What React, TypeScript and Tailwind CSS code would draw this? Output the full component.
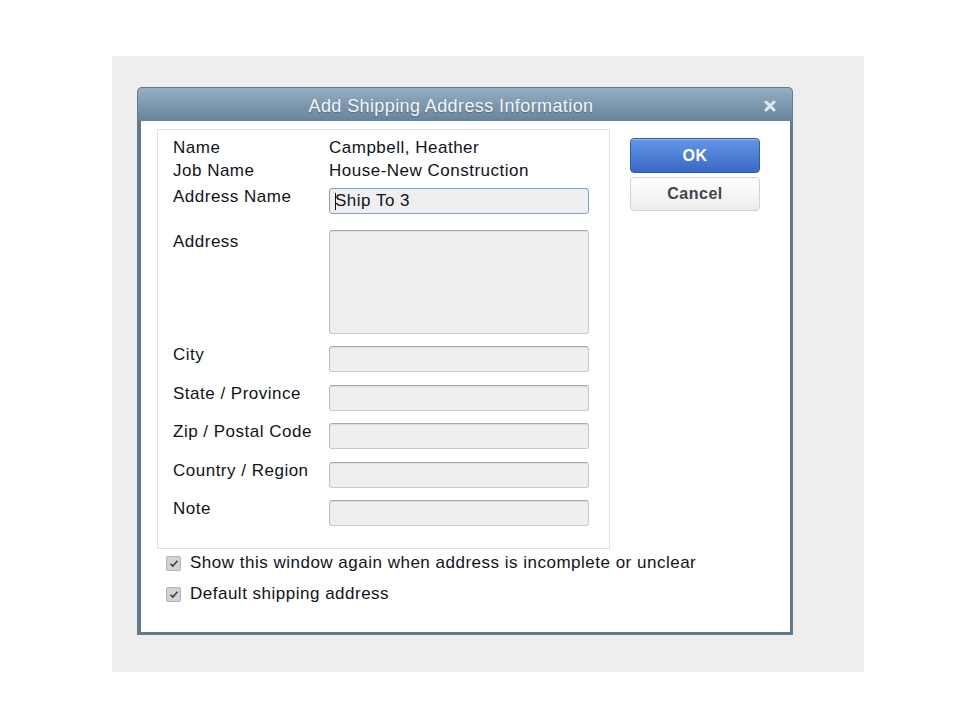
import React from "react"

const font = { fontFamily: '"Liberation Sans", Arial, sans-serif' }

function Field({ label, height = "h-[26px]", className = "", labelClass = "-mt-[2px]", active = false, value = "" }: { label: string; height?: string; className?: string; labelClass?: string; active?: boolean; value?: string }) {
  return (
    <div className={`flex items-start ${className}`}>
      <div className={`w-[156px] ${labelClass} leading-[22px]`}>{label}</div>
      <div
        className={`w-[260px] ${height} rounded-[3px] bg-[#efefef] ${
          active
            ? "border border-[#7ea3d3]"
            : "border border-[#cacaca] border-t-[#a9a9a9] border-l-[#bdbdbd] shadow-[inset_0_1px_1px_rgba(0,0,0,0.08)]"
        } flex items-center px-[5px]`}
      >
        {active && (
          <>
            <span className="w-px h-[17px] bg-[#111] -mr-[1px]" />
            <span>{value}</span>
          </>
        )}
      </div>
    </div>
  )
}

function Check({ label, className = "" }: { label: string; className?: string }) {
  return (
    <div className={`flex items-center h-[22px] ${className}`}>
      <span className="w-[15px] h-[15px] ml-[9px] mr-[9px] rounded-[2px] bg-[#d3d3d3] border border-[#b3b3b3] flex items-center justify-center">
        <svg width="10" height="9" viewBox="0 0 10 9">
          <path d="M1.5 4.8 L3.8 7 L8.5 1.8" fill="none" stroke="#444" strokeWidth="1.7" />
        </svg>
      </span>
      <span className="leading-[22px]">{label}</span>
    </div>
  )
}

export default function App() {
  return (
    <div className="w-[960px] h-[720px] bg-white pt-[56px] pl-[112px] text-[#12121c]" style={font}>
      <div className="w-[752px] h-[616px] bg-[#eeeeee] pt-[31px] pl-[25px]">
        <div className="w-[656px] h-[548px] flex flex-col">
          {/* Title bar */}
          <div className="h-[34px] rounded-t-[5px] bg-gradient-to-b from-[#94aec2] to-[#68849a] border border-b-0 border-[#5f7b90] flex items-center pr-[28px] pt-[3px]">
            <div className="flex-1 text-center text-[18px] tracking-[0.4px] text-[#f4f6f8] [text-shadow:0_1px_1px_rgba(0,0,0,0.25)]">
              Add Shipping Address Information
            </div>
            <svg width="12" height="12" viewBox="0 0 12 12" className="mr-[-12px]">
              <path d="M2 2 L10 10 M10 2 L2 10" stroke="#e3e9ee" strokeWidth="3" strokeLinecap="round" />
            </svg>
          </div>

          {/* Body */}
          <div className="flex-1 bg-white border-l-[4px] border-r-[3px] border-b-[3px] border-[#5f7b90] pl-[16px] pt-[8px] text-[17px] tracking-[0.5px]">
            <div className="flex">
              <div className="w-[453px] h-[420px] border border-[#e2e2e2] pl-[15px] pt-[7px]">
                <div className="flex leading-[22px]">
                  <div className="w-[156px]">Name</div>
                  <div>Campbell, Heather</div>
                </div>
                <div className="flex leading-[22px] mt-[1px]">
                  <div className="w-[156px]">Job Name</div>
                  <div>House-New Construction</div>
                </div>
                <Field label="Address Name" className="mt-[6px]" active value="Ship To 3" />
                <Field label="Address" height="h-[104px]" className="mt-[16px]" labelClass="mt-[1px]" />
                <Field label="City" className="mt-[12px]" />
                <Field label="State / Province" className="mt-[13px]" />
                <Field label="Zip / Postal Code" className="mt-[12px]" />
                <Field label="Country / Region" className="mt-[13px]" />
                <Field label="Note" className="mt-[12px]" />
              </div>

              <div className="ml-[20px] mt-[9px] flex flex-col gap-[4px]">
                <button className="w-[130px] h-[35px] rounded-[4px] border border-[#2f5ea8] bg-gradient-to-b from-[#6397e4] to-[#3a68c6] text-white font-bold text-[16px] tracking-[0.5px] shadow-[inset_0_1px_0_rgba(255,255,255,0.3)]">
                  OK
                </button>
                <button className="w-[130px] h-[34px] rounded-[4px] border border-[#d2d2d2] bg-gradient-to-b from-[#ffffff] to-[#ececec] text-[#44444f] font-bold text-[16px] tracking-[0.5px]">
                  Cancel
                </button>
              </div>
            </div>

            <Check label="Show this window again when address is incomplete or unclear" className="mt-[3px]" />
            <Check label="Default shipping address" className="mt-[9px]" />
          </div>
        </div>
      </div>
    </div>
  )
}
